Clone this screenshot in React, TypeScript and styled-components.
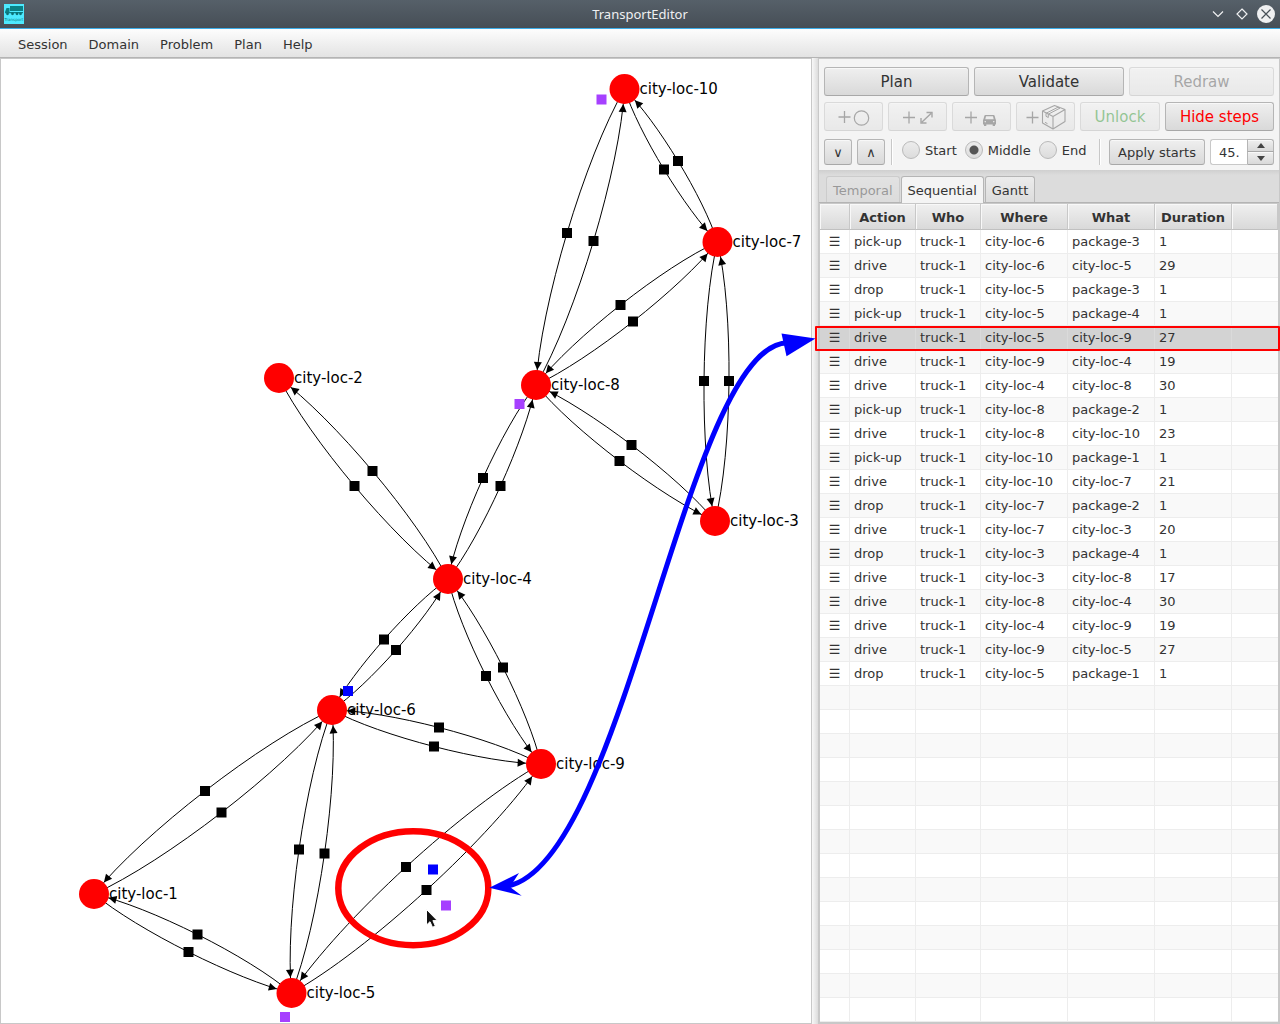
import React, { useState } from "react";
import styled, { createGlobalStyle, css } from "styled-components";

const GlobalStyle = createGlobalStyle`
  * { box-sizing: border-box; }
  body { margin: 0; background: #f4f4f4; }
  body, button, input, table {
    font-family: "DejaVu Sans", "Liberation Sans", sans-serif;
    font-size: 13px;
    color: #333;
  }
`;

const edge = "#c8c8c8";

const Window = styled.div`
  display: flex;
  flex-direction: column;
  min-height: 100vh;
`;

const TitleBar = styled.header`
  display: grid;
  grid-template-columns: 80px 1fr 80px;
  align-items: center;
  height: 29px;
  padding: 0 4px;
  background: linear-gradient(#566069, #464e56);
  border-bottom: 1px solid #3daee9;
`;

const Title = styled.h1`
  margin: 0;
  font: 400 13px/18px "Noto Sans", sans-serif;
  color: #eff0f1;
  text-align: center;
`;

const WindowButtons = styled.div`
  display: flex;
  justify-content: flex-end;
  gap: 4px;
`;

const WindowButton = styled.button`
  width: 20px;
  height: 20px;
  padding: 0;
  border: 0;
  background: none;
  svg { display: block; }
`;

const MenuBar = styled.nav`
  display: flex;
  gap: 21px;
  height: 29px;
  padding: 0 18px;
  background: linear-gradient(#fdfdfd, #e3e3e3);
  border-bottom: 1px solid #b4b4b4;
`;

const MenuItem = styled.button`
  padding: 2px 0 0;
  border: 0;
  background: none;
`;

const Workspace = styled.main`
  position: relative;
  display: flex;
  flex: 1;
`;

const Canvas = styled.section`
  flex: 1;
  min-width: 0;
  overflow: hidden;
  background: #fff;
  border: 1px solid ${edge};
  svg { display: block; }
`;

const Divider = styled.div`
  flex: none;
  width: 6px;
  background: linear-gradient(90deg, #f8f8f8, #dcdcdc);
`;

const SidePanel = styled.aside`
  display: flex;
  flex-direction: column;
  flex: none;
  width: 462px;
  background: #f4f4f4;
  border: 1px solid ${edge};
`;

const Tools = styled.div`
  display: flex;
  flex-direction: column;
  padding: 8px 5px 5px;
`;

const ToolRow = styled.div<{ $gap?: number }>`
  display: flex;
  gap: 5px;
  margin-bottom: ${(p) => p.$gap ?? 0}px;
`;

const raised = css`
  border: 1px solid #b5b5b5;
  border-bottom-color: #a8a8a8;
  border-radius: 3px;
  background: linear-gradient(#efefef, #d9d9d9);
  box-shadow: inset 0 1px 0 #f8f8f8;
`;

const Button = styled.button<{ $width?: number; $size?: "small" | "large"; $tone?: string }>`
  ${raised}
  display: flex;
  align-items: center;
  justify-content: center;
  flex: ${(p) => (p.$width ? `none` : "1 1 0")};
  width: ${(p) => (p.$width ? `${p.$width}px` : "auto")};
  height: ${(p) => (p.$size === "small" ? 26 : 29)}px;
  padding: 0;
  font-size: ${(p) => (p.$size === "small" ? 13 : 15)}px;
  color: ${(p) => p.$tone ?? "#333"};
  white-space: nowrap;
  &:disabled { opacity: 0.4; }
`;

const Separator = styled.span<{ $end?: boolean }>`
  flex: none;
  width: 2px;
  height: 26px;
  margin: ${(p) => (p.$end ? "0 3px 0 auto" : "0 4px 0 1px")};
  border-left: 1px solid ${edge};
  background: #fff;
`;

const Choices = styled.div`
  display: flex;
  gap: 8px;
  height: 22px;
`;

const Choice = styled.label`
  display: flex;
  align-items: center;
  gap: 5px;
`;

const Radio = styled.input`
  appearance: none;
  width: 18px;
  height: 18px;
  margin: 0;
  border: 1px solid #b9b9b9;
  border-radius: 50%;
  background: linear-gradient(#ececec, #dcdcdc);
  &:checked {
    background: radial-gradient(circle, #555 4px, transparent 5px), linear-gradient(#ececec, #dcdcdc);
  }
`;

const Spinner = styled.div`
  display: flex;
  width: 64px;
  height: 26px;
`;

const SpinnerField = styled.input`
  flex: 1;
  min-width: 0;
  padding: 0 0 0 8px;
  border: 1px solid ${edge};
  border-right: 0;
  border-radius: 3px 0 0 3px;
  background: #fff;
`;

const SpinnerButtons = styled.div`
  display: grid;
  grid-template-rows: 1fr 1fr;
  width: 27px;
`;

const SpinnerButton = styled.button<{ $down?: boolean }>`
  ${raised}
  display: flex;
  align-items: center;
  justify-content: center;
  padding: 0;
  border-radius: ${(p) => (p.$down ? "0 0 3px 0" : "0 3px 0 0")};
  ${(p) => p.$down && "border-top: 0;"}
`;

const TabBar = styled.div`
  display: flex;
  align-items: flex-end;
  gap: 1px;
  height: 33px;
  padding: 0 7px;
  background: linear-gradient(#cfcfcf, #dcdcdc 5px);
  border-bottom: 1px solid #b4b4b4;
`;

const Tab = styled.button<{ $active?: boolean }>`
  height: 26px;
  padding: 2px 6px 0;
  border: 1px solid #b5b5b5;
  border-bottom: 0;
  border-radius: 3px 3px 0 0;
  background: linear-gradient(#ececec, #dcdcdc);
  &:disabled { opacity: 0.4; }
  ${(p) =>
    p.$active &&
    css`
      height: 27px;
      margin-bottom: -1px;
      padding-bottom: 1px;
      background: #f4f4f4;
    `}
`;

const Steps = styled.table`
  width: 100%;
  table-layout: fixed;
  border-collapse: separate;
  border-spacing: 0;
  border: 1px solid ${edge};
  background: #fff;
`;

const HeadCell = styled.th`
  height: 26px;
  padding: 1px 0 0;
  font-weight: 700;
  background: linear-gradient(#f0f0f0, #d9d9d9);
  border-right: 1px solid ${edge};
  border-bottom: 1px solid #c0c0c0;
  box-shadow: inset 1px 1px 0 #f8f8f8;
`;

const Row = styled.tr<{ $selected?: boolean }>`
  background: #fff;
  &:nth-child(even) { background: #f9f9f9; }
  ${(p) =>
    p.$selected &&
    css`
      &&& {
        position: relative;
        background: #d3d3d3;
      }
      td { border-right-color: #dadada; border-bottom-color: #d3d3d3; }
      td:first-child::after {
        content: "";
        position: absolute;
        inset: 0 -2px -1px -5px;
        border: 2px solid #f00;
        border-radius: 1px;
      }
    `}
`;

const Cell = styled.td`
  height: 24px;
  padding: 0 0 0 4px;
  line-height: 15px;
  border-right: 1px solid #ededed;
  border-bottom: 1px solid #ededed;
  white-space: nowrap;
  &:last-child { border-right: 0; }
`;

const HandleCell = styled(Cell)`
  padding: 0;
  text-align: center;
`;

const Annotation = styled.svg`
  position: absolute;
  top: 0;
  left: 0;
  overflow: visible;
  pointer-events: none;
`;

type Point = [number, number];

const cities: Record<number, Point> = {
  1: [94, 894],
  2: [279, 378],
  3: [715, 521],
  4: [448, 579],
  5: [291.5, 993],
  6: [332, 710],
  7: [717.5, 242],
  8: [536, 385],
  9: [541, 764],
  10: [624.5, 89],
};

/* from, to, and the middle point of the road */
const roads: [number, number, number, number][] = [
  [10, 8, 567, 233], [8, 10, 593.5, 241],
  [10, 7, 664, 169.5], [7, 10, 678, 161],
  [7, 8, 620.5, 305], [8, 7, 633, 321.5],
  [7, 3, 704, 381], [3, 7, 729, 381],
  [8, 3, 619.5, 461], [3, 8, 631.5, 445],
  [8, 4, 483, 478], [4, 8, 500.5, 486],
  [2, 4, 354.5, 486], [4, 2, 372.5, 471],
  [4, 6, 384, 639.5], [6, 4, 396, 650],
  [4, 9, 486, 676], [9, 4, 503, 667.5],
  [6, 9, 434, 746.5], [9, 6, 439, 727.5],
  [6, 1, 205, 791], [1, 6, 221.5, 812.5],
  [6, 5, 299, 849.5], [5, 6, 324.5, 853.5],
  [1, 5, 188.5, 952], [5, 1, 197.5, 934.5],
  [9, 5, 406, 867], [5, 9, 426.5, 890],
];

const packages: Point[] = [[601.5, 99.5], [519.5, 404], [446, 905.5], [285, 1017]];
const trucks: Point[] = [[348, 691], [433, 869.5]];

function Marker({ at, fill }: { at: Point; fill: string }) {
  return <rect x={at[0] - 5} y={at[1] - 5} width={10} height={10} fill={fill} />;
}

/* control point: a quarter along the chord from `near`, bulged so the curve meets `mid` */
function bulge(near: Point, far: Point, mid: Point): Point {
  return [0, 1].map(
    (i) => near[i] * 0.75 + far[i] * 0.25 + (4 / 3) * (mid[i] - (near[i] + far[i]) / 2),
  ) as Point;
}

function Road({ from, to, mid }: { from: Point; to: Point; mid: Point }) {
  const c1 = bulge(from, to, mid);
  const c2 = bulge(to, from, mid);
  /* walk back along the curve to the rim of the target city */
  let tip = to;
  let t = 1;
  while (Math.hypot(tip[0] - to[0], tip[1] - to[1]) < 15) {
    t -= 0.002;
    const s = 1 - t;
    tip = [0, 1].map(
      (i) => s ** 3 * from[i] + 3 * s * s * t * c1[i] + 3 * s * t * t * c2[i] + t ** 3 * to[i],
    ) as Point;
  }
  const angle = (Math.atan2(to[1] - tip[1], to[0] - tip[0]) * 180) / Math.PI;
  return (
    <g>
      <path
        d={`M${from.join(" ")}C${c1.join(" ")} ${c2.join(" ")} ${to.join(" ")}`}
        fill="none"
        stroke="#000"
        strokeWidth={1}
      />
      <path d="M0 0L-8 4V-4Z" transform={`translate(${tip.join(" ")}) rotate(${angle})`} />
      <Marker at={mid} fill="#000" />
    </g>
  );
}

function RoadMap() {
  return (
    <svg width="810" height="964" viewBox="1 59 810 964" role="img" aria-label="Road map">
      {Object.entries(cities).map(([id, [x, y]]) => (
        <text key={id} x={x + 15} y={y + 5} fontSize="15" fill="#000">{`city-loc-${id}`}</text>
      ))}
      {roads.map(([a, b, x, y]) => (
        <Road key={`${a}-${b}`} from={cities[a]} to={cities[b]} mid={[x, y]} />
      ))}
      {Object.entries(cities).map(([id, [x, y]]) => (
        <circle key={id} cx={x} cy={y} r={15} fill="#f00" />
      ))}
      {packages.map((p) => (
        <Marker key={p.join()} at={p} fill="#a640ff" />
      ))}
      {trucks.map((p) => (
        <Marker key={p.join()} at={p} fill="#00f" />
      ))}
      <path
        d="M426.500 909.500V925L430 921.700L432.500 927.300L435.300 926L432.900 920.600H437.300Z"
        fill="#111"
        stroke="#fff"
        strokeWidth="1"
      />
    </svg>
  );
}

const Plus = ({ x, y }: { x: number; y: number }) => (
  <path d={`M${x - 6} ${y}h12M${x} ${y - 6}v12`} stroke="#333" strokeWidth="1.3" />
);

const toolIcons: { label: string; art: React.ReactNode }[] = [
  {
    label: "Add location",
    art: (
      <>
        <Plus x={19.5} y={14} />
        <circle cx="36.500" cy="15" r="7.200" fill="none" stroke="#333" strokeWidth="1.200" />
      </>
    ),
  },
  {
    label: "Add road",
    art: (
      <>
        <Plus x={20} y={14.5} />
        <path d="M33 19L42 10.500M37.500 9.500H43V14.500M32 15V20H37.500" fill="none" stroke="#333" strokeWidth="1.400" />
      </>
    ),
  },
  {
    label: "Add vehicle",
    art: (
      <>
        <Plus x={18} y={14.5} />
        <path
          fillRule="evenodd"
          fill="#333"
          d="M32.500 12h8q1 0 1.200 1l.8 3q.5.500.5 1.500v4h-1v1.500h-2.300v-1.500h-6.400v1.500h-2.300v-1.500h-1v-4q0-1 .5-1.500l.8-3q.2-1 1.200-1zM33 13.200l-.7 3h8.400l-.7-3zM32.200 17.900a.7.7 0 1 0 .1 0zM40.700 17.900a.7.7 0 1 0 .1 0z"
        />
      </>
    ),
  },
  {
    label: "Add package",
    art: (
      <>
        <Plus x={15.5} y={14.5} />
        <path
          d="M37.500 2.500L25.500 8L36 13.500L48 6.500ZM25.500 8V20L36 26V13.500M48 6.500V18.500L36 26"
          fill="none"
          stroke="#333"
          strokeWidth="1.100"
          strokeLinejoin="round"
        />
        <path d="M29 10.300L41 4.200L43 5.100L31.300 11.200V14.500L29 13.300ZM28 19.300L30.500 20.700" fill="none" stroke="#333" strokeWidth="1" />
      </>
    ),
  },
];

const steps = [
  ["pick-up", "truck-1", "city-loc-6", "package-3", "1"],
  ["drive", "truck-1", "city-loc-6", "city-loc-5", "29"],
  ["drop", "truck-1", "city-loc-5", "package-3", "1"],
  ["pick-up", "truck-1", "city-loc-5", "package-4", "1"],
  ["drive", "truck-1", "city-loc-5", "city-loc-9", "27"],
  ["drive", "truck-1", "city-loc-9", "city-loc-4", "19"],
  ["drive", "truck-1", "city-loc-4", "city-loc-8", "30"],
  ["pick-up", "truck-1", "city-loc-8", "package-2", "1"],
  ["drive", "truck-1", "city-loc-8", "city-loc-10", "23"],
  ["pick-up", "truck-1", "city-loc-10", "package-1", "1"],
  ["drive", "truck-1", "city-loc-10", "city-loc-7", "21"],
  ["drop", "truck-1", "city-loc-7", "package-2", "1"],
  ["drive", "truck-1", "city-loc-7", "city-loc-3", "20"],
  ["drop", "truck-1", "city-loc-3", "package-4", "1"],
  ["drive", "truck-1", "city-loc-3", "city-loc-8", "17"],
  ["drive", "truck-1", "city-loc-8", "city-loc-4", "30"],
  ["drive", "truck-1", "city-loc-4", "city-loc-9", "19"],
  ["drive", "truck-1", "city-loc-9", "city-loc-5", "27"],
  ["drop", "truck-1", "city-loc-5", "package-1", "1"],
];

const columns = ["", "Action", "Who", "Where", "What", "Duration", ""];
const columnWidths = [30, 66, 65, 87, 87, 77];
const emptyRows = Array.from({ length: 14 }, (_, i) => i);

function StepTable() {
  return (
    <Steps>
      <colgroup>
        {columnWidths.map((w, i) => (
          <col key={i} width={w} />
        ))}
        <col />
      </colgroup>
      <thead>
        <tr>
          {columns.map((c, i) => (
            <HeadCell key={i} scope="col">{c}</HeadCell>
          ))}
        </tr>
      </thead>
      <tbody>
        {steps.map((step, i) => (
          <Row key={i} $selected={i === 4}>
            <HandleCell>☰</HandleCell>
            {step.map((value, j) => (
              <Cell key={j}>{value}</Cell>
            ))}
            <Cell />
          </Row>
        ))}
        {emptyRows.map((i) => (
          <Row key={`empty-${i}`}>
            {columns.map((_, j) => (
              <Cell key={j} />
            ))}
          </Row>
        ))}
      </tbody>
    </Steps>
  );
}

function AppIcon() {
  return (
    <svg width="20" height="20" viewBox="0 0 20 20" aria-hidden="true">
      <rect width="20" height="20" fill="#4deaff" />
      <path d="M6 2H19V7H6ZM1 8L2.500 4H5.500V8H19V9.200H1Z" fill="#0b8186" />
      <circle cx="3.500" cy="9.800" r="1.400" fill="#0b7075" />
      <circle cx="8.500" cy="9.800" r="1.400" fill="#0b7075" />
      <circle cx="13" cy="9.800" r="1.400" fill="#0b7075" />
      <circle cx="16.500" cy="9.800" r="1.400" fill="#0b7075" />
      <text x="10" y="16.500" fontSize="4" textAnchor="middle" fill="#0b8186">Transport</text>
    </svg>
  );
}

export default function App() {
  const [start, setStart] = useState("Middle");
  const [time, setTime] = useState("45.");
  return (
    <Window>
      <GlobalStyle />
      <TitleBar>
        <AppIcon />
        <Title>TransportEditor</Title>
        <WindowButtons>
          <WindowButton aria-label="Minimize">
            <svg width="20" height="20" viewBox="0 0 20 20">
              <path d="M5 7.500L10 12.500L15 7.500" fill="none" stroke="#eff0f1" strokeWidth="1.200" />
            </svg>
          </WindowButton>
          <WindowButton aria-label="Maximize">
            <svg width="20" height="20" viewBox="0 0 20 20">
              <path d="M10 5L15 10L10 15L5 10Z" fill="none" stroke="#eff0f1" strokeWidth="1.200" />
            </svg>
          </WindowButton>
          <WindowButton aria-label="Close">
            <svg width="20" height="20" viewBox="0 0 20 20">
              <circle cx="10" cy="10" r="9" fill="#eff0f1" />
              <path d="M5.500 5.500L14.500 14.500M14.500 5.500L5.500 14.500" stroke="#475057" strokeWidth="1.200" />
            </svg>
          </WindowButton>
        </WindowButtons>
      </TitleBar>
      <MenuBar>
        {["Session", "Domain", "Problem", "Plan", "Help"].map((m) => (
          <MenuItem key={m}>{m}</MenuItem>
        ))}
      </MenuBar>
      <Workspace>
        <Canvas>
          <RoadMap />
        </Canvas>
        <Divider />
        <SidePanel>
          <Tools>
            <ToolRow $gap={6}>
              <Button>Plan</Button>
              <Button $width={150}>Validate</Button>
              <Button disabled>Redraw</Button>
            </ToolRow>
            <ToolRow $gap={8}>
              {toolIcons.map(({ label, art }) => (
                <Button key={label} $width={59} aria-label={label} disabled>
                  <svg width="57" height="27" viewBox="0 0 57 27">{art}</svg>
                </Button>
              ))}
              <Button $width={80} $tone="#008000" disabled>Unlock</Button>
              <Button $tone="#f00">Hide steps</Button>
            </ToolRow>
            <ToolRow>
              <Button $width={28} $size="small" aria-label="Move down">∨</Button>
              <Button $width={28} $size="small" aria-label="Move up">∧</Button>
              <Separator />
              <Choices role="radiogroup" aria-label="Start point">
                {["Start", "Middle", "End"].map((c) => (
                  <Choice key={c}>
                    <Radio type="radio" name="start" checked={start === c} onChange={() => setStart(c)} />
                    {c}
                  </Choice>
                ))}
              </Choices>
              <Separator $end />
              <Button $width={96} $size="small">Apply starts</Button>
              <Spinner>
                <SpinnerField aria-label="Time" value={time} onChange={(e) => setTime(e.target.value)} />
                <SpinnerButtons>
                  <SpinnerButton aria-label="Increase">
                    <svg width="8" height="5"><path d="M0 5L4 0L8 5Z" fill="#444" /></svg>
                  </SpinnerButton>
                  <SpinnerButton $down aria-label="Decrease">
                    <svg width="8" height="5"><path d="M0 0L4 5L8 0Z" fill="#444" /></svg>
                  </SpinnerButton>
                </SpinnerButtons>
              </Spinner>
            </ToolRow>
          </Tools>
          <TabBar role="tablist">
            <Tab role="tab" disabled>Temporal</Tab>
            <Tab role="tab" aria-selected $active>Sequential</Tab>
            <Tab role="tab">Gantt</Tab>
          </TabBar>
          <StepTable />
        </SidePanel>
        <Annotation width="815" height="964" viewBox="0 58 815 964" aria-hidden="true">
          <ellipse cx="413.300" cy="888.200" rx="75" ry="57" fill="none" stroke="#f00" strokeWidth="6.500" />
          <path d="M508 886C627 862 688 329 792 343" fill="none" stroke="#00f" strokeWidth="5" />
          <path d="M489.300 887.700L519 873L510 887L521.700 895.700Z" fill="#00f" />
          <path d="M815.500 338.500L781.500 333.500L786.500 356.200Z" fill="#00f" />
        </Annotation>
      </Workspace>
    </Window>
  );
}
